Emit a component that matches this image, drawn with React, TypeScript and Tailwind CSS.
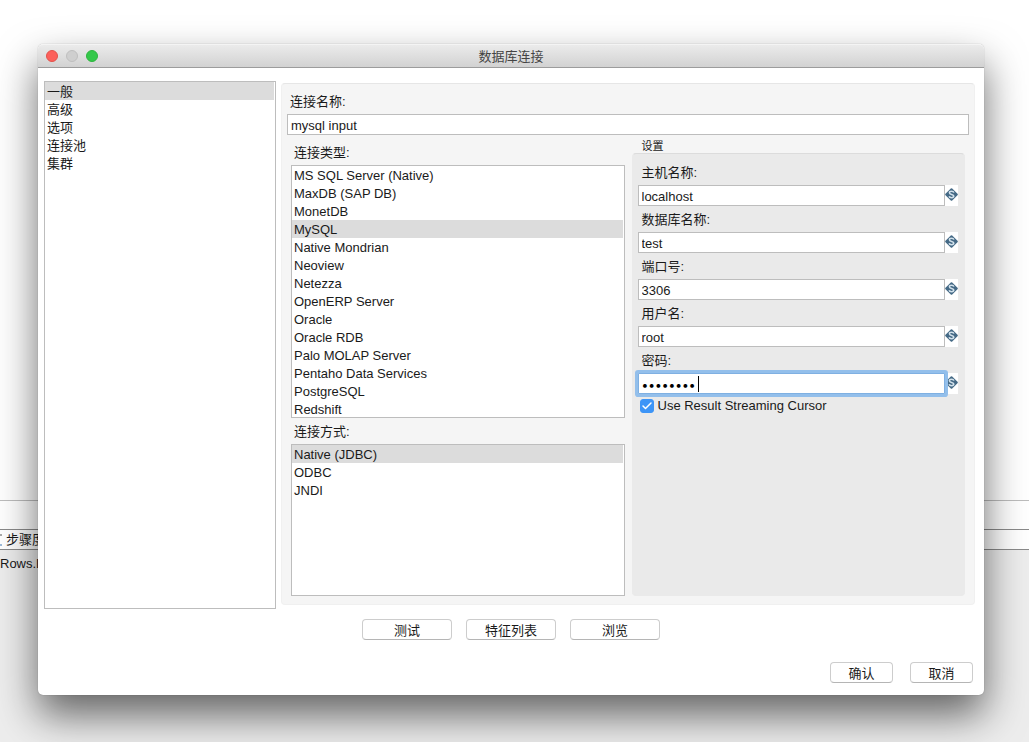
import React, { useState } from 'react';
import { Check } from 'lucide-react';

interface ListBoxProps {
  label: string;
  items: string[];
  initial: string;
  className?: string;
}

interface FieldProps {
  id: string;
  label: string;
  value: string;
}

const tabs = ['一般', '高级', '选项', '连接池', '集群'];

const connectionTypes = [
  'MS SQL Server (Native)',
  'MaxDB (SAP DB)',
  'MonetDB',
  'MySQL',
  'Native Mondrian',
  'Neoview',
  'Netezza',
  'OpenERP Server',
  'Oracle',
  'Oracle RDB',
  'Palo MOLAP Server',
  'Pentaho Data Services',
  'PostgreSQL',
  'Redshift',
];

const accessMethods = ['Native (JDBC)', 'ODBC', 'JNDI'];

const fields: FieldProps[] = [
  { id: 'host', label: '主机名称:', value: 'localhost' },
  { id: 'database', label: '数据库名称:', value: 'test' },
  { id: 'port', label: '端口号:', value: '3306' },
  { id: 'user', label: '用户名:', value: 'root' },
];

const ListBox: React.FC<ListBoxProps> = ({ label, items, initial, className = '' }) => {
  const [selected, setSelected] = useState(initial);

  return (
    <ul
      role="listbox"
      aria-label={label}
      className={`overflow-hidden border border-[#bdbdbd] bg-white pr-px ${className}`}
    >
      {items.map((item) => (
        <li
          key={item}
          role="option"
          aria-selected={item === selected}
          onClick={() => setSelected(item)}
          className={`h-[18px] cursor-default pl-0.5 leading-5 ${item === selected ? 'bg-[#dcdcdc]' : ''}`}
        >
          {item}
        </li>
      ))}
    </ul>
  );
};

const VariableIcon = () => (
  <span className="flex h-[21px] w-[13px] shrink-0 justify-center bg-white pt-[3px]">
    <svg width="13" height="13" viewBox="0 0 13 13" aria-hidden="true">
      <path
        d="M6.5 1.2 11.8 6.5 6.5 11.8 1.2 6.5Z"
        fill="#456a86"
        stroke="#456a86"
        strokeWidth="2"
        strokeLinejoin="round"
      />
      <path
        d="M8.9 4.6C8.4 2.9 4.4 2.8 4.4 4.8C4.4 6.9 8.8 5.9 8.8 8.1C8.8 10.2 4.6 10.1 4.1 8.3"
        fill="none"
        stroke="#d3e2ec"
        strokeWidth="1.5"
      />
    </svg>
  </span>
);

const Field: React.FC<FieldProps> = ({ id, label, value }) => (
  <div>
    <label htmlFor={id} className="block h-[26px] pl-1 leading-7">
      {label}
    </label>
    <div className="flex">
      <input
        id={id}
        type="text"
        defaultValue={value}
        className="h-[21px] min-w-0 flex-1 border border-[#bdbdbd] bg-white px-[3px] pt-0.5 outline-none"
      />
      <VariableIcon />
    </div>
  </div>
);

const PushButton: React.FC<{ wide?: boolean; children: React.ReactNode }> = ({ wide, children }) => (
  <button
    type="button"
    className={`h-[21px] rounded border border-[#cdcdcd] border-b-[#b5b5b5] bg-white pt-0.5 leading-[18px] ${wide ? 'w-[90px]' : 'w-[63px]'}`}
  >
    {children}
  </button>
);

// Main window that stays visible around the dialog
const Backdrop = () => (
  <div className="flex h-screen flex-col overflow-hidden bg-white">
    <div className="h-[500px] shrink-0" />
    <div className="h-[29px] shrink-0 border-t border-[#bdbdbd]" />
    <div className="flex h-[21px] shrink-0 items-center border-y border-[#8a8a8a]">
      <svg width="3" height="12" viewBox="0 0 3 12" className="mr-[3px]" aria-hidden="true">
        <path d="M0 1H2" stroke="#555" />
        <path d="M0 11H2" stroke="#3f78b5" />
      </svg>
      <span className="whitespace-nowrap">步骤度</span>
    </div>
    <div className="flex-1 bg-[#ededed]">
      <p className="pt-1 leading-5">Rows.L</p>
    </div>
  </div>
);

const Dialog = () => (
  <section
    aria-labelledby="dialog-title"
    className="absolute top-11 right-[45px] left-[38px] rounded-[5px] bg-white shadow-[0_0_1px_rgba(0,0,0,0.4),0_20px_40px_rgba(0,0,0,0.58)]"
  >
    <header className="grid h-6 grid-cols-[1fr_auto_1fr] items-center rounded-t-[5px] border-t border-b border-t-[#f4f4f4] border-b-[#9c9c9c] bg-linear-to-b from-[#ebebeb] to-[#d2d2d2] px-2">
      <div className="flex gap-2">
        <button type="button" aria-label="关闭" className="size-3 rounded-full border border-[#e2524b] bg-[#fc605b]" />
        <button type="button" aria-label="最小化" className="size-3 rounded-full border border-[#bfbfbf] bg-[#cfcfcf]" />
        <button type="button" aria-label="缩放" className="size-3 rounded-full border border-[#2db53e] bg-[#34c84a]" />
      </div>
      <h1 id="dialog-title" className="pt-px leading-5 text-[#444]">
        数据库连接
      </h1>
    </header>

    <div className="flex gap-[5px] pt-[13px] pr-[9px] pl-1.5">
      <ListBox label="类别" items={tabs} initial="一般" className="h-[528px] w-[232px] shrink-0" />

      <div className="mt-0.5 flex h-[522px] min-w-0 flex-1 flex-col rounded border border-[#f0f0f0] border-t-[#e6e6e6] bg-[#f5f5f5]">
        <div className="px-[5px]">
          <label htmlFor="name" className="block h-[30px] pt-1 pl-[3px] leading-7">
            连接名称:
          </label>
          <input
            id="name"
            type="text"
            defaultValue="mysql input"
            className="block h-[21px] w-full border border-[#bdbdbd] bg-white px-[3px] pt-0.5 outline-none"
          />
        </div>

        <div className="flex flex-1 gap-[7px] px-[9px] pb-2">
          <div className="flex min-w-0 flex-1 flex-col">
            <h2 className="h-[30px] pt-1 pl-[3px] leading-7">连接类型:</h2>
            <ListBox label="连接类型" items={connectionTypes} initial="MySQL" className="h-[253px]" />
            <h2 className="h-[26px] pl-[3px] leading-7">连接方式:</h2>
            <ListBox label="连接方式" items={accessMethods} initial="Native (JDBC)" className="flex-1" />
          </div>

          <div className="flex min-w-0 flex-1 flex-col">
            <h2 className="h-[18px] pt-1 pl-2.5 text-[11px] leading-[14px]">设置</h2>
            <div className="flex-1 rounded border border-[#eaeaea] border-t-[#dcdcdc] bg-[#eaeaea] pt-[5px] pr-1.5 pl-[5px]">
              {fields.map((field) => (
                <Field key={field.id} {...field} />
              ))}

              <label htmlFor="password" className="block h-[26px] pl-1 leading-7">
                密码:
              </label>
              <div className="flex">
                <div className="relative flex min-w-0 flex-1">
                  <input
                    id="password"
                    type="password"
                    defaultValue="password"
                    className="h-[21px] w-full rounded-[1px] border border-[#7fb0e2] bg-white px-[3px] pt-0.5 font-['Inter'] text-xs text-black ring-3 ring-[#93bfeb] outline-none"
                  />
                  <span className="absolute top-[3px] left-[60px] h-4 w-px bg-black" />
                </div>
                <VariableIcon />
              </div>

              <label className="flex h-6 items-center gap-1 pl-0.5">
                <span className="grid size-3.5 shrink-0">
                  <input
                    type="checkbox"
                    defaultChecked
                    className="peer col-start-1 row-start-1 size-3.5 appearance-none rounded-[3px] border border-[#b5b5b5] bg-white checked:border-[#3d95f7] checked:bg-[#3d95f7]"
                  />
                  <Check
                    size={12}
                    strokeWidth={3}
                    className="pointer-events-none invisible col-start-1 row-start-1 place-self-center text-white peer-checked:visible"
                  />
                </span>
                Use Result Streaming Cursor
              </label>
            </div>
          </div>
        </div>
      </div>
    </div>

    <div className="mt-2.5 flex justify-center gap-3.5">
      <PushButton wide>测试</PushButton>
      <PushButton wide>特征列表</PushButton>
      <PushButton wide>浏览</PushButton>
    </div>
    <div className="mt-[22px] flex justify-end gap-[17px] pr-[11px] pb-3">
      <PushButton>确认</PushButton>
      <PushButton>取消</PushButton>
    </div>
  </section>
);

const App = () => (
  <main className="relative min-h-screen overflow-hidden font-['Liberation_Sans','Noto_Sans_CJK_SC',sans-serif] text-[13px] text-[#1a1a1a]">
    <Backdrop />
    <Dialog />
  </main>
);

export default App;
